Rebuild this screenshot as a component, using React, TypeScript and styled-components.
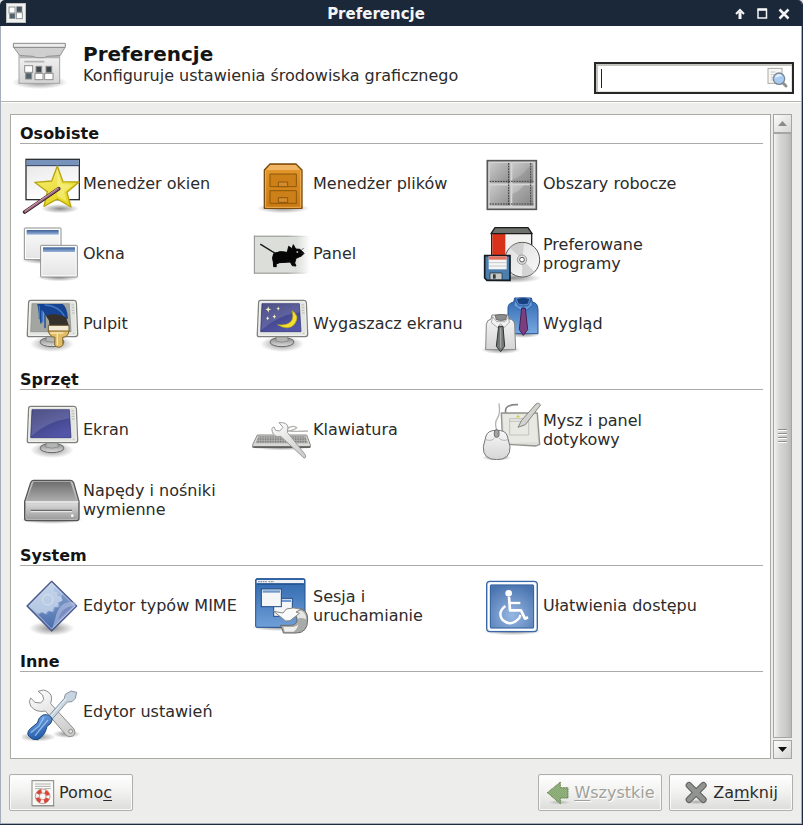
import React from "react";
import styled, { createGlobalStyle } from "styled-components";

const GlobalStyle = createGlobalStyle`
  *, *::before, *::after { box-sizing: border-box; }
  body {
    margin: 0;
    background: #e4e7ea;
    font-family: "DejaVu Sans", sans-serif;
    font-size: 16px;
    line-height: 19px;
    color: #2b2b2b;
  }
  button { font: inherit; color: inherit; padding: 0; }
`;

/* ---------- window ---------- */

const Window = styled.div`
  min-height: 100vh;
  display: flex;
  flex-direction: column;
  background: #ededeb;
  border-right: 1px solid #1f2b40;
  border-bottom: 1px solid #1f2b40;
  border-radius: 5px 5px 0 0;
  overflow: hidden;
`;

const TitleBar = styled.div`
  display: grid;
  grid-template-columns: 20px 1fr auto;
  align-items: center;
  height: 26px;
  padding: 0 10px 0 6px;
  background: #1b283a;
  color: #f4f4f4;
`;

const WindowTitle = styled.div`
  font-size: 15px;
  font-weight: bold;
  padding-top: 3px;
  text-align: center;
`;

const WindowButtons = styled.div`
  display: flex;
  gap: 6px;
  padding: 2px 0 0 6px;
`;

const WindowButton = styled.button`
  display: flex;
  width: 16px;
  height: 16px;
  border: 0;
  background: none;
`;

const Content = styled.div`
  flex: 1;
  display: flex;
  flex-direction: column;
  border: 1px solid #a4aebb;
  border-top: 0;
`;

const Header = styled.header`
  display: flex;
  align-items: center;
  gap: 12px;
  height: 76px;
  padding: 0 7px 0 10px;
  background: #fff;
  border-bottom: 1px solid #b3b3ae;
`;

const HeaderText = styled.div`
  flex: 1;
`;

const Title = styled.h1`
  margin: 0;
  font-size: 20px;
  line-height: 24px;
  color: #141414;
`;

const Subtitle = styled.p`
  margin: 0;
`;

const SearchBox = styled.label`
  display: flex;
  align-items: center;
  align-self: flex-start;
  width: 200px;
  height: 32px;
  margin-top: 36px;
  padding: 0 2px 0 5px;
  background: #fff;
  border: 2px solid #262724;
  box-shadow: inset 1px 1px 0 1px #c2c5be, inset -1px -1px 0 0 #e3e5e0;
`;

const Caret = styled.span`
  width: 1px;
  height: 19px;
  background: #222;
`;

const SearchInput = styled.input`
  flex: 1;
  min-width: 0;
  height: 24px;
  border: 0;
  outline: 0;
  padding: 0 2px;
  background: transparent;
  font: inherit;
  caret-color: transparent;
`;

/* ---------- list ---------- */

const ListArea = styled.div`
  flex: 1;
  display: flex;
  gap: 2px;
  padding: 11px 9px 0 9px;
  border-top: 1px solid #fff;
`;

const ListPanel = styled.main`
  flex: 1;
  padding: 9px 7px 14px 9px;
  background: #fff;
  border: 1px solid #a9aaa4;
`;

const Section = styled.section`
  padding-bottom: 16px;
  &:last-child { padding-bottom: 0; }
`;

const SectionTitle = styled.h2`
  margin: 0 0 10px;
  height: 20px;
  font-size: 16px;
  line-height: 19px;
  color: #141414;
  border-bottom: 1px solid #aaaaa6;
`;

const ItemGrid = styled.div`
  display: grid;
  grid-template-columns: repeat(auto-fill, 230px);
  row-gap: 10px;
  padding-left: 2px;
`;

const Item = styled.button`
  display: flex;
  align-items: center;
  height: 60px;
  border: 0;
  background: none;
  text-align: left;
`;

const ItemIcon = styled.svg`
  flex: none;
  width: 60px;
  height: 60px;
`;

const ItemLabel = styled.span`
  max-width: 166px;
  padding: 0 0 1px 1px;
`;

/* ---------- scroll bar ---------- */

const ScrollBar = styled.div`
  display: flex;
  flex-direction: column;
  width: 19px;
`;

const ScrollArrow = styled.button`
  display: flex;
  align-items: center;
  justify-content: center;
  height: 19px;
  border: 1px solid #a5a6a0;
  background: linear-gradient(135deg, #fbfbfa, #d6d6d3);
`;

const ScrollThumb = styled.div`
  flex: 1;
  display: flex;
  flex-direction: column;
  align-items: center;
  justify-content: center;
  gap: 2px;
  margin-bottom: 2px;
  border: 1px solid #a5a6a0;
  background: linear-gradient(90deg, #f2f2f1, #d9d9d8 30%, #c9c9c7 75%, #b9b9b7);
`;

const Grip = styled.div`
  width: 9px;
  height: 2px;
  border-top: 1px solid #8f8f8c;
  background: #fff;
`;

/* ---------- footer ---------- */

const Footer = styled.footer`
  display: flex;
  gap: 7px;
  padding: 15px 8px 12px;
`;

const Spacer = styled.div`
  flex: 1;
`;

const ActionButton = styled.button`
  display: flex;
  align-items: center;
  justify-content: center;
  gap: 3px;
  width: 124px;
  height: 37px;
  border: 1px solid #aeb0aa;
  border-radius: 2px;
  background: linear-gradient(#fff, #f1f1f0 50%, #dcddd9);
  box-shadow: inset 0 0 0 1px #fafaf9;
  &:disabled {
    color: #a0a19c;
    text-shadow: 1px 1px 0 #fff;
  }
`;

const ButtonIcon = styled.svg`
  width: 26px;
  height: 28px;
`;

const Mnemonic = styled.span`
  text-decoration: underline;
  text-decoration-thickness: 1px;
  text-underline-offset: 2px;
`;

/* ---------- drawings ---------- */

const Gradient = ({ id, from, to, x2 = 0 }: { id: string; from: string; to: string; x2?: number }) => (
  <linearGradient id={id} x1="0" y1="0" x2={x2} y2="1">
    <stop offset="0" stopColor={from} />
    <stop offset="1" stopColor={to} />
  </linearGradient>
);

const SharedDefs = () => (
  <defs>
    <Gradient id="paper" from="#e6e6e6" to="#ffffff" x2={0.4} />
    <Gradient id="blueBar" from="#3b5f96" to="#9bb5dc" />
    <Gradient id="star" from="#f8f28a" to="#e6d51a" x2={0.5} />
    <Gradient id="wood" from="#e79a2b" to="#c8780e" />
    <Gradient id="night" from="#31356f" to="#5356a8" x2={0.6} />
    <Gradient id="grayTile" from="#c9c9c9" to="#8e8e8e" x2={1} />
    <Gradient id="disc" from="#dcdcdc" to="#fafafa" x2={1} />
    <Gradient id="blueShirt" from="#2f67b1" to="#78a9e0" />
    <Gradient id="whiteShirt" from="#f8f8f8" to="#d5d5d5" />
    <Gradient id="driveTop" from="#6e6e6e" to="#aeaeae" />
    <Gradient id="driveFront" from="#dadada" to="#9c9c9c" />
    <Gradient id="metal" from="#ffffff" to="#cfcfcf" x2={0.5} />
    <Gradient id="mime" from="#c5d6ee" to="#4a6db0" />
    <Gradient id="session" from="#2f68ad" to="#6f9fd8" />
    <Gradient id="handle" from="#83b4ee" to="#1f57a6" x2={0.4} />
    <Gradient id="stand" from="#888888" to="#dddddd" />
    <radialGradient id="access" cx="0.5" cy="0.7" r="0.7">
      <stop offset="0" stopColor="#97b7e2" />
      <stop offset="1" stopColor="#4a74b0" />
    </radialGradient>
    <radialGradient id="shadow">
      <stop offset="0" stopColor="#000" stopOpacity="0.45" />
      <stop offset="1" stopColor="#000" stopOpacity="0" />
    </radialGradient>
    <linearGradient id="panelFade">
      <stop offset="0" stopColor="#dcdeda" />
      <stop offset="0.75" stopColor="#dcdeda" />
      <stop offset="1" stopColor="#dcdeda" stopOpacity="0" />
    </linearGradient>
    <linearGradient id="panelLine">
      <stop offset="0" stopColor="#8c8f8a" />
      <stop offset="0.6" stopColor="#8c8f8a" />
      <stop offset="1" stopColor="#8c8f8a" stopOpacity="0" />
    </linearGradient>
    <pattern id="keys" width="5" height="5" patternUnits="userSpaceOnUse">
      <rect width="5" height="5" fill="#b5b5b3" />
      <rect width="3" height="3" fill="#70706e" />
    </pattern>
    <pattern id="dither" width="6" height="6" patternUnits="userSpaceOnUse">
      <rect width="6" height="6" fill="#a6c192" />
      <path d="M0 0h3v3h-3zM3 3h3v3h-3z" fill="#76995f" />
    </pattern>
  </defs>
);

const AppIcon = () => (
  <svg width="20" height="20" viewBox="0 0 60 60" aria-hidden="true">
    <SharedDefs />
    <rect x="1" y="1" width="58" height="58" fill="#f1f1ef" stroke="#c9cbc8" strokeWidth="2" />
    <rect x="32" y="11" width="16" height="16" fill="#49555f" stroke="#8d9499" strokeWidth="2" />
    <rect x="11" y="31" width="16" height="16" fill="#52626b" stroke="#8d9499" strokeWidth="2" />
    <rect x="9" y="12" width="18" height="18" fill="#fff" stroke="#8d9499" strokeWidth="3" />
    <rect x="31" y="29" width="18" height="18" fill="#fff" stroke="#8d9499" strokeWidth="3" />
  </svg>
);

const HeaderIcon = () => (
  <svg width="60" height="54" viewBox="32 114 180 162" aria-hidden="true">
    <ellipse cx="118" cy="250" rx="84" ry="20" fill="url(#shadow)" />
    <rect x="56" y="150" width="122" height="103" fill="url(#whiteShirt)" stroke="#a5a5a5" strokeWidth="3" />
    <path d="M58 170h118v8H58z" fill="#8c8c8c" opacity="0.6" />
    <path d="M40 145h154l-14 24-40 3-8 4h-24l-10-4-40-3z" fill="#cfcfcf" stroke="#959595" strokeWidth="3" />
    <path d="M39 133h156v12H39z" fill="#ececec" stroke="#8a8a8a" strokeWidth="3" />
    <path d="M72 188h60" stroke="#b4b4b4" strokeWidth="5" />
    <g stroke="#8d8d8d" strokeWidth="3">
      <rect x="76" y="222" width="18" height="18" fill="#52626b" />
      <rect x="107" y="202" width="17" height="18" fill="#3e474c" />
      <rect x="137" y="202" width="17" height="18" fill="#3e474c" />
      <g fill="#fff">
        <rect x="73" y="200" width="24" height="20" />
        <rect x="104" y="223" width="24" height="19" />
        <rect x="133" y="223" width="25" height="19" />
      </g>
    </g>
  </svg>
);

const SearchIcon = () => (
  <svg width="24" height="24" viewBox="620 198 72 72" aria-hidden="true">
    <rect x="626" y="205" width="42" height="45" fill="#f7f7f5" stroke="#a9aaa6" strokeWidth="3" />
    <path d="M634 216h14M634 224h10M634 232h8M634 240h10" stroke="#c4c4c2" strokeWidth="3" />
    <path d="M671 249l9 9" stroke="#8f918e" strokeWidth="9" strokeLinecap="round" />
    <circle cx="659" cy="236" r="17" fill="#a9cbf0" stroke="#7c8794" strokeWidth="4" />
    <path d="M647 234a12 12 0 0 1 22-6q-10 0-22 6z" fill="#e3f0fd" />
  </svg>
);

type Box = { view: string; children: React.ReactNode };
const Drawing = ({ view, children }: Box) => (
  <ItemIcon viewBox={view} aria-hidden="true">{children}</ItemIcon>
);

const WindowManagerIcon = () => (
  <Drawing view="36 9 180 180">
    <ellipse cx="150" cy="173" rx="58" ry="14" fill="url(#shadow)" />
    <rect x="48" y="25" width="160" height="121" fill="url(#paper)" stroke="#2e3134" strokeWidth="4" />
    <rect x="50" y="27" width="156" height="16" fill="#7793bb" />
    <path d="M49 44h158" stroke="#263a59" strokeWidth="3" />
    <path d="M142 45l17 47 48 1-36 31 12 44-41-24-40 22 10-44-38-28 51-4z" fill="url(#star)" stroke="#b7a410" strokeWidth="4" strokeLinejoin="round" />
    <path d="M142 62l13 37 34 2-27 22 9 29-29-17z" fill="#fffbb0" opacity="0.45" />
    <path d="M44 183L146 113" stroke="#33272d" strokeWidth="11" strokeLinecap="round" />
    <path d="M45 182L145 113" stroke="#a7667f" strokeWidth="6" strokeLinecap="round" />
    <path d="M45 180L144 111" stroke="#dfb3c2" strokeWidth="2" />
  </Drawing>
);

const SmallWindow = ({ x, y }: { x: number; y: number }) => (
  <g transform={`translate(${x} ${y})`}>
    <ellipse cx="55" cy="96" rx="64" ry="12" fill="url(#shadow)" />
    <rect width="110" height="95" rx="2" fill="#fdfdfd" stroke="#8b8e8c" strokeWidth="3" />
    <rect x="5" y="5" width="100" height="85" fill="url(#whiteShirt)" opacity="0.6" />
    <rect x="7" y="6" width="96" height="14" fill="url(#blueBar)" />
  </g>
);

const WindowsIcon = () => (
  <Drawing view="36 219 180 180">
    <SmallWindow x={43} y={231} />
    <SmallWindow x={92} y={283} />
  </Drawing>
);

const MonitorBase = () => (
  <>
    <ellipse cx="126" cy="579" rx="66" ry="24" fill="url(#shadow)" />
    <ellipse cx="126" cy="573" rx="36" ry="14" fill="url(#stand)" stroke="#666866" strokeWidth="3" />
    <path d="M110 556h32l3 14q-19 7-38 0z" fill="#b5b6b3" stroke="#7c7e7b" strokeWidth="2" />
    <path d="M62 448h130q6 0 7 6l4 96q0 7-7 7H57q-6 0-5-7l4-96q0-6 6-6z" fill="#e3e5e0" stroke="#7d807b" strokeWidth="4" />
    <path d="M63 452h127q5 0 6 5l3 91q0 5-5 5H61q-5 0-5-5l3-91q0-5 4-5z" fill="none" stroke="#fafafa" strokeWidth="2" />
    <path d="M184 462h8M185 470h8M185 478h8M186 486h8" stroke="#a5a7a3" strokeWidth="2" />
    <circle cx="191" cy="547" r="2" fill="#b1b9a5" />
  </>
);

const ScreenGlass = () => (
  <>
    <path d="M66 458h112l5 84H62z" fill="url(#night)" stroke="#262a72" strokeWidth="2" />
    <path d="M67 459h110l1 25q-65 10-114 53z" fill="#fff" opacity="0.14" />
  </>
);

const DesktopIcon = () => (
  <Drawing view="36 429 180 180">
    <MonitorBase />
    <path d="M66 458h112l5 84H62z" fill="#a3a5a0" stroke="#898b86" strokeWidth="2" />
    <path d="M82 459h76q14 10 16 44l-60 2-7-14v40q-4 2-4-2v-42l-8-10v40q-4 3-4-1z" fill="#164391" />
    <path d="M104 462q44 2 62 38M88 464v40M98 480v34" stroke="#3f76c4" strokeWidth="4" fill="none" />
    <path d="M108 494q28-10 60 4l9 28h-60q4-18-9-32z" fill="#35312a" />
    <path d="M115 523h62v20h-62z" fill="#f2ead2" stroke="#6b5a36" strokeWidth="3" />
    <path d="M116 540h60q0 18-18 19l1 23q-13 14-25 0l1-23q-18-2-19-19z" fill="#e2bd68" stroke="#826429" strokeWidth="3" />
    <path d="M142 545v38M122 546h38" stroke="#f8e5ad" strokeWidth="4" />
  </Drawing>
);

const ScreensaverIcon = () => (
  <Drawing view="36 429 180 180">
    <MonitorBase />
    <ScreenGlass />
    <path d="M156 479q25 15 8 40-19 22-51 2 33 4 43-14 5-12 0-28z" fill="#f3e22b" stroke="#b7a217" strokeWidth="2" />
    <path d="M85 466l2 7 7 2-7 3-2 7-3-7-6-3 6-2zM115 466l1 5 4 2-4 2-1 5-2-5-4-2 4-2zM103 490l2 5 4 2-4 2-2 5-2-5-4-2 4-2zM83 496l2 4 3 2-3 2-2 4-2-4-3-2 3-2z" fill="#f7f0c0" />
  </Drawing>
);

const DisplayIcon = () => (
  <Drawing view="36 429 180 180">
    <MonitorBase />
    <ScreenGlass />
  </Drawing>
);

const FileManagerIcon = () => (
  <Drawing view="36 9 180 180">
    <ellipse cx="129" cy="172" rx="80" ry="15" fill="url(#shadow)" />
    <path d="M90 39h78l18 18v115H73V57z" fill="url(#wood)" stroke="#7b4a0c" strokeWidth="4" strokeLinejoin="round" />
    <path d="M91 42h76l14 15H78z" fill="#f0b565" />
    <path d="M77 59v110h105V59" fill="none" stroke="#efb15c" strokeWidth="3" />
    <g fill="#cc8017" stroke="#8d570e" strokeWidth="3">
      <path d="M90 69h79v38H90zM90 119h79v38H90z" />
      <path d="M115 93h28v14h-28zM115 140h28v14h-28z" fill="#d48b2c" />
    </g>
  </Drawing>
);

const PanelIcon = () => (
  <Drawing view="36 219 180 180">
    <rect x="42" y="255" width="170" height="112" fill="url(#panelFade)" />
    <path d="M43 254v114" stroke="#8c8f8a" strokeWidth="3" />
    <rect x="42" y="254" width="160" height="3" fill="url(#panelLine)" />
    <rect x="42" y="365" width="160" height="3" fill="url(#panelLine)" />
    <path d="M62 280l34 21 12 7" fill="none" stroke="#1b1b1b" strokeWidth="4" strokeLinecap="round" />
    <path d="M101 308q18-10 41-4l4-18 10 7 4-12 7 13 13 1 12 12-8 8-16 7-4 14 4 9-11-1-6-11-32 2-11 4 1 8h-8l-1-14q-5-11 1-25z" fill="#050505" stroke="#050505" strokeWidth="3" strokeLinejoin="round" />
    <circle cx="172" cy="303" r="3" fill="#aaa" />
    <path d="M184 298l7-7M183 305l8 5" stroke="#333" strokeWidth="2" />
  </Drawing>
);

const WorkspacesIcon = () => (
  <Drawing view="36 9 180 180">
    <rect x="52" y="29" width="147" height="146" fill="#d5d5d5" stroke="#565856" strokeWidth="5" />
    <g fill="url(#grayTile)">
      <rect x="59" y="36" width="62" height="61" />
      <rect x="127" y="36" width="63" height="61" />
      <rect x="59" y="103" width="62" height="61" />
      <rect x="127" y="103" width="63" height="61" />
    </g>
    <path d="M59 91h131M59 159h131M116 36v128M182 36v128" stroke="#353535" strokeWidth="3" strokeDasharray="5 3" fill="none" />
    <path d="M127 97v-12q28-8 42-28 10-13 21-14v54zM127 164v-35q20-8 36-26h27v61z" fill="#707070" opacity="0.25" />
  </Drawing>
);

const ProgramsIcon = () => (
  <Drawing view="36 219 180 180">
    <ellipse cx="130" cy="381" rx="84" ry="15" fill="url(#shadow)" />
    <path d="M65 247h120v100H65z" fill="#f2f2f0" stroke="#222" strokeWidth="4" />
    <path d="M67 249h39v90H67z" fill="#d8321a" />
    <path d="M63 248l12-18h99l12 18z" fill="#6f716e" stroke="#1c1c1c" strokeWidth="4" strokeLinejoin="round" />
    <circle cx="157" cy="326" r="52" fill="url(#disc)" stroke="#555" strokeWidth="3" />
    <path d="M157 326L120 290q18-17 42-14zM157 326l37 36q-16 16-38 13z" fill="#bfbfbf" opacity="0.6" />
    <circle cx="156" cy="326" r="14" fill="#dfdfdf" stroke="#777" strokeWidth="2" />
    <circle cx="156" cy="326" r="7" fill="#fff" stroke="#555" strokeWidth="3" />
    <path d="M44 314h76v74H51l-7-7z" fill="#4c7eae" stroke="#151b22" strokeWidth="5" />
    <path d="M56 316h54v39H56z" fill="#f5f5f5" />
    <path d="M56 316h54v10H56z" fill="#e4715f" />
    <path d="M57 335h52M57 345h52" stroke="#c5c9cd" strokeWidth="3" />
    <path d="M60 366h36v20H60z" fill="#c6c9c6" stroke="#1b2128" strokeWidth="2" />
    <rect x="69" y="370" width="8" height="13" fill="#353c3e" />
  </Drawing>
);

const AppearanceIcon = () => (
  <Drawing view="36 429 180 180">
    <ellipse cx="160" cy="549" rx="54" ry="12" fill="url(#shadow)" />
    <path d="M134 441h50l3 12q17 2 17 24v71h-90v-78q0-13 17-17z" fill="url(#blueShirt)" stroke="#2a5596" strokeWidth="3" />
    <path d="M139 443q20-8 40 0l-4 16q-14 5-30 0z" fill="#173f7d" stroke="#78a3dd" strokeWidth="2" />
    <path d="M135 447l-4 17 20 14 9-12 10 12 18-16-4-15-10 18h-28z" fill="#6599d8" stroke="#26579a" strokeWidth="2" />
    <path d="M155 472h11l7 64-13 17-12-17z" fill="#7b3f80" stroke="#452252" strokeWidth="3" />
    <ellipse cx="92" cy="596" rx="60" ry="13" fill="url(#shadow)" />
    <path d="M66 492h48l3 12q17 1 17 20l3 72H47l2-76q1-13 14-16z" fill="url(#whiteShirt)" stroke="#858585" strokeWidth="3" />
    <path d="M75 493q19-6 36 0l-4 13q-14 5-28 0z" fill="#8c8c8c" stroke="#555" strokeWidth="2" />
    <path d="M68 497l-4 18 19 15 9-12 10 12 16-16-3-16-10 14H80z" fill="#f2f2f2" stroke="#888" strokeWidth="2" />
    <path d="M86 526h13l5 60-12 16-13-16z" fill="#737776" stroke="#303332" strokeWidth="3" />
    <path d="M92 532v58" stroke="#a3a7a6" strokeWidth="4" />
  </Drawing>
);

const KeyboardIcon = () => (
  <Drawing view="36 27 180 180">
    <ellipse cx="125" cy="170" rx="90" ry="8" fill="url(#shadow)" />
    <path d="M52 132h148l11 29v8H38v-8z" fill="#d8d8d6" stroke="#888886" strokeWidth="3" strokeLinejoin="round" />
    <path d="M55 136h141l8 21H47z" fill="url(#keys)" />
    <path d="M40 168h170" stroke="#50504e" strokeWidth="4" />
    <path d="M138 116q20-16 32-6-8 8-28 10 30 2 62 0" fill="none" stroke="#b4b4b2" strokeWidth="4" />
    <path d="M117 95q24-2 27 13l-2 16 53 66q5 12-3 11l-70-65q-20 4-25-14-4-13 5-14l5 10 12 2 10-11z" fill="url(#metal)" stroke="#9c9c9a" strokeWidth="3" strokeLinejoin="round" />
  </Drawing>
);

const MouseIcon = () => (
  <Drawing view="726 27 180 180">
    <path d="M798 70q-5-20 8-25t28-4" fill="none" stroke="#888" strokeWidth="5" />
    <path d="M784 66h108l7 94-11 5-100-6z" fill="#deded8" stroke="#92938d" strokeWidth="4" strokeLinejoin="round" />
    <path d="M789 70h99l5 83-99 3z" fill="#e9e9e3" />
    <path d="M809 83h57v49h-57zM809 91h57" fill="none" stroke="#afb0aa" strokeWidth="2" />
    <path d="M834 72v8M829 77h10" stroke="#d4cf55" strokeWidth="4" />
    <path d="M888 39q10-6 13 4l-45 58-22 8 10-20z" fill="#d2d2ce" stroke="#858681" strokeWidth="3" />
    <path d="M771 120q-9-24 1-38t5-45" fill="none" stroke="#b3b3b1" strokeWidth="4" />
    <ellipse cx="770" cy="200" rx="45" ry="9" fill="url(#shadow)" />
    <path d="M770 118q27-1 32 17l8 32q2 39-40 39t-40-39l8-32q6-18 32-17z" fill="url(#whiteShirt)" stroke="#777" strokeWidth="3" />
    <path d="M737 146q17 6 27-5M804 146q-17 6-27-5" fill="none" stroke="#9a9a9a" strokeWidth="2" />
    <rect x="763" y="116" width="14" height="23" rx="7" fill="#a2a2a2" stroke="#6e6e6e" strokeWidth="3" />
  </Drawing>
);

const DriveIcon = () => (
  <Drawing view="36 297 180 180">
    <ellipse cx="125" cy="447" rx="94" ry="12" fill="url(#shadow)" />
    <path d="M70 328h112q6 0 9 7l16 57v50q0 7-7 7H50q-6 0-6-7v-50l18-57q3-7 8-7z" fill="#bcbcbc" stroke="#555" strokeWidth="4" />
    <path d="M71 332h110l20 59H49z" fill="url(#driveTop)" />
    <path d="M48 397h156v42q0 6-6 6H53q-5 0-5-6z" fill="url(#driveFront)" />
    <path d="M47 393h158" stroke="#f1f1f1" strokeWidth="5" />
    <path d="M62 418h124" stroke="#6a6a6a" strokeWidth="4" />
    <path d="M62 422h124" stroke="#efefef" strokeWidth="3" />
    <circle cx="187" cy="434" r="4" fill="#fff" />
  </Drawing>
);

const MimeIcon = () => (
  <Drawing view="36 105 180 180">
    <ellipse cx="125" cy="262" rx="68" ry="22" fill="url(#shadow)" />
    <path d="M125 121l75 74-75 75-74-75z" fill="url(#mime)" stroke="#4d598a" strokeWidth="4" strokeLinejoin="round" />
    <path d="M125 126l8 11-2 14 12 2-1 12 13 1 1 14-12 4 1 13-13 1-4 14-13-3-9 11-10-7-12 6-27-24z" fill="#c4d5ea" opacity="0.8" />
    <path d="M128 126l32 31-7 10 6 11-11 7 1 14-13 2-4 13-13-2-9 11-10-8-12 7 37 42 70-69z" fill="#4166a5" opacity="0.4" />
    <path d="M196 184q-49-8-60 48-5 16-10 33l71-70z" fill="#b6c2e5" opacity="0.6" />
    <path d="M190 196q-36 2-45 40z" fill="#6c80b9" opacity="0.7" />
    <circle cx="113" cy="176" r="16" fill="none" stroke="#e1eaf5" strokeWidth="3" opacity="0.7" />
    <path d="M125 127l69 68-69 69-68-69z" fill="none" stroke="#dee6f5" strokeWidth="2" opacity="0.7" />
  </Drawing>
);

const SessionIcon = () => (
  <Drawing view="36 45 180 180">
    <ellipse cx="118" cy="199" rx="86" ry="11" fill="url(#shadow)" />
    <rect x="47" y="53" width="148" height="146" rx="4" fill="url(#session)" stroke="#234f8c" strokeWidth="3" />
    <path d="M50 57h142v10H50z" fill="#edf0f4" />
    <path d="M54 62h28M86 62h16" stroke="#8e9299" strokeWidth="4" strokeDasharray="5 2" />
    <path d="M51 69h140" stroke="#17437f" strokeWidth="3" />
    <rect x="101" y="112" width="56" height="54" fill="#f5f6f7" stroke="#1d4b88" strokeWidth="3" />
    <rect x="104" y="116" width="49" height="7" fill="#7299cd" />
    <rect x="64" y="84" width="60" height="53" fill="#f5f6f7" stroke="#1d4b88" strokeWidth="3" />
    <rect x="68" y="88" width="52" height="7" fill="#7299cd" />
    <path d="M168 143q35-4 35 32 0 41-34 41h-39q-2-12-9-23h30q20 0 20-18 0-10-8-12z" fill="#a9aba8" stroke="#686a67" strokeWidth="3" strokeLinejoin="round" />
    <path d="M176 147q23 4 22 28-18-7-25-1-1-12-9-14z" fill="#e6e7e4" />
    <path d="M130 198h30q10-1 15-8-4 16-14 22h-27z" fill="#eeeeec" />
    <path d="M101 151l28 5 10-12q20-7 45 1l-16 8 10 4-28 22-13 1z" fill="#fafafa" stroke="#858783" strokeWidth="3" strokeLinejoin="round" />
  </Drawing>
);

const AccessibilityIcon = () => (
  <Drawing view="726 45 180 180">
    <ellipse cx="818" cy="211" rx="88" ry="12" fill="url(#shadow)" />
    <rect x="740" y="61" width="152" height="151" rx="10" fill="#e7eef8" stroke="#3a67a8" strokeWidth="4" />
    <rect x="747" y="68" width="138" height="137" rx="5" fill="url(#access)" stroke="#fff" strokeWidth="6" />
    <rect x="751" y="72" width="130" height="129" rx="3" fill="none" stroke="#38649f" strokeWidth="3" />
    <g fill="none" stroke="#fff" strokeWidth="8" strokeLinejoin="round">
      <path d="M807 108l3 40h33l12 25 9-4" />
      <path d="M810 126h31" strokeWidth="7" />
      <path d="M796 135q-25 20-8 42 25 22 50-6l3-9" strokeWidth="7" />
    </g>
    <circle cx="806" cy="97" r="10" fill="#fff" />
  </Drawing>
);

const SettingsEditorIcon = () => (
  <Drawing view="36 423 180 180">
    <ellipse cx="82" cy="588" rx="56" ry="14" fill="url(#shadow)" />
    <ellipse cx="170" cy="579" rx="42" ry="12" fill="url(#shadow)" />
    <path d="M84 451l16-4q24 5 25 25l-3 16 70 76q7 14-4 21-12 5-19-2l-63-73q-28 6-44-15-8-15 0-24l13 13 17 2 9-10-3-14z" fill="url(#metal)" stroke="#8d8f8b" strokeWidth="3" strokeLinejoin="round" />
    <circle cx="182" cy="571" r="6" fill="#e3e3e1" stroke="#8d8f8b" strokeWidth="3" />
    <path d="M117 524l46-52 3-12 17-10 17 4-4 18-10 10-14 1-45 51z" fill="#c8d4df" stroke="#8594a2" strokeWidth="3" strokeLinejoin="round" />
    <path d="M123 525l46-53" stroke="#eef3f8" strokeWidth="3" />
    <path d="M99 522q20-5 28 13-3 15-16 21-6 29-28 40-16 2-26-10-9-11 4-23 12-10 21-17 3-17 17-24z" fill="url(#handle)" stroke="#174780" strokeWidth="3" />
    <path d="M101 530l-13 24-24 20M113 538l-17 20-20 25" fill="none" stroke="#acd0f9" strokeWidth="4" strokeLinecap="round" opacity="0.75" />
  </Drawing>
);

const HelpIcon = () => (
  <ButtonIcon viewBox="86 113 78 84" aria-hidden="true">
    <path d="M92 194h68" stroke="#b5b5b1" strokeWidth="4" />
    <rect x="92" y="118" width="65" height="75" fill="#f8f8f6" stroke="#83857f" strokeWidth="3" />
    <path d="M101 128h47M101 135h47M101 142h20M130 142h18" stroke="#b0b1ad" strokeWidth="3" />
    <circle cx="124" cy="165" r="16" fill="none" stroke="#f3f3f3" strokeWidth="12" />
    <circle cx="124" cy="165" r="16" fill="none" stroke="#d94435" strokeWidth="11" strokeDasharray="14 11" strokeDashoffset="-6" />
    <circle cx="124" cy="165" r="22" fill="none" stroke="#aa665f" strokeWidth="2" />
    <circle cx="124" cy="165" r="10" fill="#f8f8f6" stroke="#aa665f" strokeWidth="2" />
  </ButtonIcon>
);

const BackIcon = () => (
  <ButtonIcon viewBox="40 147 78 84" aria-hidden="true">
    <ellipse cx="83" cy="217" rx="34" ry="7" fill="url(#shadow)" opacity="0.5" />
    <path d="M47 188l39-32v17h23v31H86v17z" fill="url(#dither)" stroke="#55753f" strokeWidth="3" strokeDasharray="3 2" />
  </ButtonIcon>
);

const CloseIcon = () => (
  <ButtonIcon viewBox="460 147 78 84" aria-hidden="true">
    <ellipse cx="498" cy="216" rx="34" ry="7" fill="url(#shadow)" opacity="0.6" />
    <path d="M475 166l43 43M518 166l-43 43" stroke="#5f615f" strokeWidth="20" strokeLinecap="round" />
    <path d="M475 166l43 43M518 166l-43 43" stroke="#929492" strokeWidth="14" strokeLinecap="round" />
  </ButtonIcon>
);

/* ---------- data ---------- */

const sections = [
  {
    title: "Osobiste",
    items: [
      { label: "Menedżer okien", Icon: WindowManagerIcon },
      { label: "Menedżer plików", Icon: FileManagerIcon },
      { label: "Obszary robocze", Icon: WorkspacesIcon },
      { label: "Okna", Icon: WindowsIcon },
      { label: "Panel", Icon: PanelIcon },
      { label: "Preferowane programy", Icon: ProgramsIcon },
      { label: "Pulpit", Icon: DesktopIcon },
      { label: "Wygaszacz ekranu", Icon: ScreensaverIcon },
      { label: "Wygląd", Icon: AppearanceIcon },
    ],
  },
  {
    title: "Sprzęt",
    items: [
      { label: "Ekran", Icon: DisplayIcon },
      { label: "Klawiatura", Icon: KeyboardIcon },
      { label: "Mysz i panel dotykowy", Icon: MouseIcon },
      { label: "Napędy i nośniki wymienne", Icon: DriveIcon },
    ],
  },
  {
    title: "System",
    items: [
      { label: "Edytor typów MIME", Icon: MimeIcon },
      { label: "Sesja i uruchamianie", Icon: SessionIcon },
      { label: "Ułatwienia dostępu", Icon: AccessibilityIcon },
    ],
  },
  { title: "Inne", items: [{ label: "Edytor ustawień", Icon: SettingsEditorIcon }] },
];

export default function App() {
  return (
    <>
      <GlobalStyle />
      <Window>
        <TitleBar>
          <AppIcon />
          <WindowTitle>Preferencje</WindowTitle>
          <WindowButtons>
            <WindowButton aria-label="Zwiń">
              <svg width="16" height="16" viewBox="0 0 16 16">
                <path d="M8 13V6" stroke="#f4f4f4" strokeWidth="3" />
                <path d="M4 8l4-4 4 4" fill="none" stroke="#f4f4f4" strokeWidth="2" />
              </svg>
            </WindowButton>
            <WindowButton aria-label="Maksymalizuj">
              <svg width="16" height="16" viewBox="0 0 32 32">
                <path d="M8 7h17v17H8z" fill="none" stroke="#f4f4f4" strokeWidth="3" />
                <path d="M7 7h19" stroke="#f4f4f4" strokeWidth="5" />
              </svg>
            </WindowButton>
            <WindowButton aria-label="Zamknij okno">
              <svg width="16" height="16" viewBox="0 0 32 32">
                <path d="M7 7l18 18M25 7l-18 18" stroke="#f4f4f4" strokeWidth="5" />
              </svg>
            </WindowButton>
          </WindowButtons>
        </TitleBar>
        <Content>
          <Header>
            <HeaderIcon />
            <HeaderText>
              <Title>Preferencje</Title>
              <Subtitle>Konfiguruje ustawienia środowiska graficznego</Subtitle>
            </HeaderText>
            <SearchBox>
              <Caret />
              <SearchInput type="text" aria-label="Szukaj" />
              <SearchIcon />
            </SearchBox>
          </Header>
          <ListArea>
            <ListPanel>
              {sections.map((section) => (
                <Section key={section.title}>
                  <SectionTitle>{section.title}</SectionTitle>
                  <ItemGrid>
                    {section.items.map(({ label, Icon }) => (
                      <Item key={label}>
                        <Icon />
                        <ItemLabel>{label}</ItemLabel>
                      </Item>
                    ))}
                  </ItemGrid>
                </Section>
              ))}
            </ListPanel>
            <ScrollBar>
              <ScrollArrow aria-label="Przewiń w górę">
                <svg width="9" height="5" viewBox="0 0 18 10"><path d="M0 10L9 0l9 10z" fill="#8a8b87" /></svg>
              </ScrollArrow>
              <ScrollThumb>
                <Grip />
                <Grip />
                <Grip />
                <Grip />
              </ScrollThumb>
              <ScrollArrow aria-label="Przewiń w dół">
                <svg width="9" height="5" viewBox="0 0 18 10"><path d="M0 0h18L9 10z" fill="#111" /></svg>
              </ScrollArrow>
            </ScrollBar>
          </ListArea>
          <Footer>
            <ActionButton>
              <HelpIcon />
              <span>Pomo<Mnemonic>c</Mnemonic></span>
            </ActionButton>
            <Spacer />
            <ActionButton disabled>
              <BackIcon />
              <span><Mnemonic>W</Mnemonic>szystkie</span>
            </ActionButton>
            <ActionButton>
              <CloseIcon />
              <span>Za<Mnemonic>m</Mnemonic>knij</span>
            </ActionButton>
          </Footer>
        </Content>
      </Window>
    </>
  );
}
